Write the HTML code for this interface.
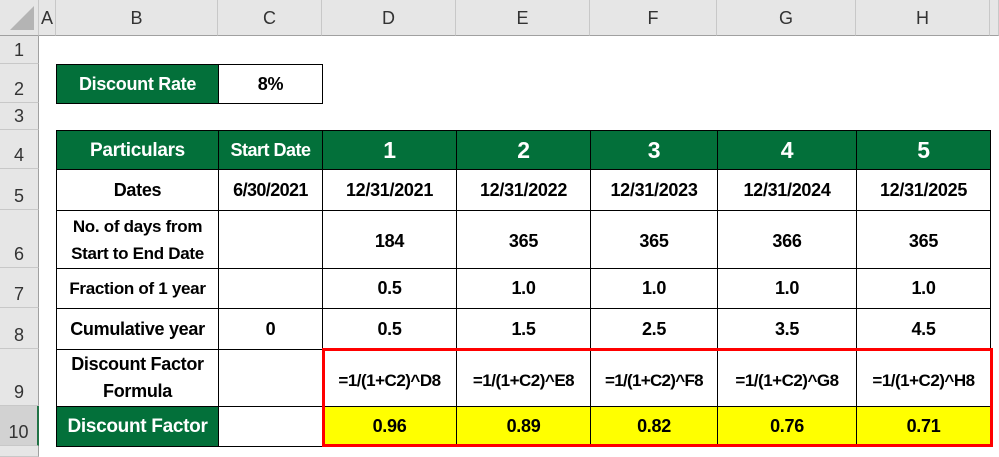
<!DOCTYPE html>
<html><head><style>
body{margin:0;width:999px;height:457px;background:#fff;position:relative;overflow:hidden;font-family:"Liberation Sans",sans-serif}
.a{position:absolute;box-sizing:border-box}
.ch{background:#e6e6e6;color:#333;font-size:18px;display:flex;align-items:center;justify-content:center;border-right:1px solid #c8c8c8;border-bottom:1px solid #a0a0a0;padding-top:2px}
.rh{background:#e6e6e6;color:#333;font-size:18px;display:flex;align-items:flex-end;justify-content:center;padding-bottom:2px;border-bottom:1px solid #c8c8c8;border-right:1px solid #a0a0a0}
.c{display:flex;align-items:center;justify-content:center;text-align:center;font-weight:bold;font-size:18px;letter-spacing:-0.3px;color:#000;border:1px solid #000;line-height:27px;white-space:nowrap}
.g{background:#03703a;color:#fff}
.y{background:#ffff00}
</style></head><body>
<div class="a ch" style="left:0;top:0;width:39px;height:36px"><svg width="30" height="30" style="position:absolute;right:2px;bottom:3px"><polygon points="28,4 28,28 4,28" fill="#b4b4b4"/></svg></div>
<div class="a ch" style="left:39px;top:0;width:17px;height:36px">A</div>
<div class="a ch" style="left:56px;top:0;width:162px;height:36px">B</div>
<div class="a ch" style="left:218px;top:0;width:104px;height:36px">C</div>
<div class="a ch" style="left:322px;top:0;width:134px;height:36px">D</div>
<div class="a ch" style="left:456px;top:0;width:134px;height:36px">E</div>
<div class="a ch" style="left:590px;top:0;width:127px;height:36px">F</div>
<div class="a ch" style="left:717px;top:0;width:139px;height:36px">G</div>
<div class="a ch" style="left:856px;top:0;width:134px;height:36px">H</div>
<div class="a ch" style="left:990px;top:0;width:9px;height:36px"></div>

<div class="a rh" style="left:0;top:36px;width:39px;height:28px">1</div>
<div class="a rh" style="left:0;top:64px;width:39px;height:39px">2</div>
<div class="a rh" style="left:0;top:103px;width:39px;height:27px">3</div>
<div class="a rh" style="left:0;top:130px;width:39px;height:39px">4</div>
<div class="a rh" style="left:0;top:169px;width:39px;height:41px">5</div>
<div class="a rh" style="left:0;top:210px;width:39px;height:58px">6</div>
<div class="a rh" style="left:0;top:268px;width:39px;height:40px">7</div>
<div class="a rh" style="left:0;top:308px;width:39px;height:41px">8</div>
<div class="a rh" style="left:0;top:349px;width:39px;height:57px">9</div>
<div class="a rh" style="left:0;top:406px;width:39px;height:40px;background:#d2d2d2;border-right:2px solid #217346">10</div>
<div class="a rh" style="left:0;top:446px;width:39px;height:11px"></div>

<div class="a c g" style="left:56px;top:64px;width:163px;height:40px">Discount Rate</div>
<div class="a c" style="left:218px;top:64px;width:105px;height:40px">8%</div>

<div class="a c g" style="left:56px;top:130px;width:163px;height:40px;font-size:19px">Particulars</div>
<div class="a c g" style="left:218px;top:130px;width:105px;height:40px;font-size:18px;letter-spacing:-0.5px">Start Date</div>
<div class="a c g" style="left:322px;top:130px;width:135px;height:40px;font-size:23px">1</div>
<div class="a c g" style="left:456px;top:130px;width:135px;height:40px;font-size:23px">2</div>
<div class="a c g" style="left:590px;top:130px;width:128px;height:40px;font-size:23px">3</div>
<div class="a c g" style="left:717px;top:130px;width:140px;height:40px;font-size:23px">4</div>
<div class="a c g" style="left:856px;top:130px;width:135px;height:40px;font-size:23px">5</div>

<div class="a c" style="left:56px;top:169px;width:163px;height:42px">Dates</div>
<div class="a c" style="left:218px;top:169px;width:105px;height:42px;letter-spacing:-0.6px">6/30/2021</div>
<div class="a c" style="left:322px;top:169px;width:135px;height:42px">12/31/2021</div>
<div class="a c" style="left:456px;top:169px;width:135px;height:42px">12/31/2022</div>
<div class="a c" style="left:590px;top:169px;width:128px;height:42px">12/31/2023</div>
<div class="a c" style="left:717px;top:169px;width:140px;height:42px">12/31/2024</div>
<div class="a c" style="left:856px;top:169px;width:135px;height:42px">12/31/2025</div>

<div class="a c" style="left:56px;top:210px;width:163px;height:59px;font-size:17px">No. of days from<br>Start to End Date</div>
<div class="a c" style="left:218px;top:210px;width:105px;height:59px"></div>
<div class="a c" style="left:322px;top:210px;width:135px;height:59px;padding-top:4px">184</div>
<div class="a c" style="left:456px;top:210px;width:135px;height:59px;padding-top:4px">365</div>
<div class="a c" style="left:590px;top:210px;width:128px;height:59px;padding-top:4px">365</div>
<div class="a c" style="left:717px;top:210px;width:140px;height:59px;padding-top:4px">366</div>
<div class="a c" style="left:856px;top:210px;width:135px;height:59px;padding-top:4px">365</div>

<div class="a c" style="left:56px;top:268px;width:163px;height:41px;font-size:17px">Fraction of 1 year</div>
<div class="a c" style="left:218px;top:268px;width:105px;height:41px"></div>
<div class="a c" style="left:322px;top:268px;width:135px;height:41px">0.5</div>
<div class="a c" style="left:456px;top:268px;width:135px;height:41px">1.0</div>
<div class="a c" style="left:590px;top:268px;width:128px;height:41px">1.0</div>
<div class="a c" style="left:717px;top:268px;width:140px;height:41px">1.0</div>
<div class="a c" style="left:856px;top:268px;width:135px;height:41px">1.0</div>

<div class="a c" style="left:56px;top:308px;width:163px;height:42px">Cumulative year</div>
<div class="a c" style="left:218px;top:308px;width:105px;height:42px">0</div>
<div class="a c" style="left:322px;top:308px;width:135px;height:42px">0.5</div>
<div class="a c" style="left:456px;top:308px;width:135px;height:42px">1.5</div>
<div class="a c" style="left:590px;top:308px;width:128px;height:42px">2.5</div>
<div class="a c" style="left:717px;top:308px;width:140px;height:42px">3.5</div>
<div class="a c" style="left:856px;top:308px;width:135px;height:42px">4.5</div>

<div class="a c" style="left:56px;top:349px;width:163px;height:58px">Discount Factor<br>Formula</div>
<div class="a c" style="left:218px;top:349px;width:105px;height:58px"></div>
<div class="a c" style="left:322px;top:349px;width:135px;height:58px;padding-top:4px;font-size:17px;letter-spacing:-0.5px">=1/(1+C2)^D8</div>
<div class="a c" style="left:456px;top:349px;width:135px;height:58px;padding-top:4px;font-size:17px;letter-spacing:-0.5px">=1/(1+C2)^E8</div>
<div class="a c" style="left:590px;top:349px;width:128px;height:58px;padding-top:4px;font-size:17px;letter-spacing:-0.7px">=1/(1+C2)^F8</div>
<div class="a c" style="left:717px;top:349px;width:140px;height:58px;padding-top:4px;font-size:17px;letter-spacing:-0.5px">=1/(1+C2)^G8</div>
<div class="a c" style="left:856px;top:349px;width:135px;height:58px;padding-top:4px;font-size:17px;letter-spacing:-0.5px">=1/(1+C2)^H8</div>

<div class="a c g" style="left:56px;top:406px;width:163px;height:41px;font-size:19px">Discount Factor</div>
<div class="a c" style="left:218px;top:406px;width:105px;height:41px"></div>
<div class="a c y" style="left:322px;top:406px;width:135px;height:41px">0.96</div>
<div class="a c y" style="left:456px;top:406px;width:135px;height:41px">0.89</div>
<div class="a c y" style="left:590px;top:406px;width:128px;height:41px">0.82</div>
<div class="a c y" style="left:717px;top:406px;width:140px;height:41px">0.76</div>
<div class="a c y" style="left:856px;top:406px;width:135px;height:41px">0.71</div>

<div class="a" style="left:322px;top:348px;width:671px;height:99px;border:3px solid #ff0000"></div>
</body></html>
